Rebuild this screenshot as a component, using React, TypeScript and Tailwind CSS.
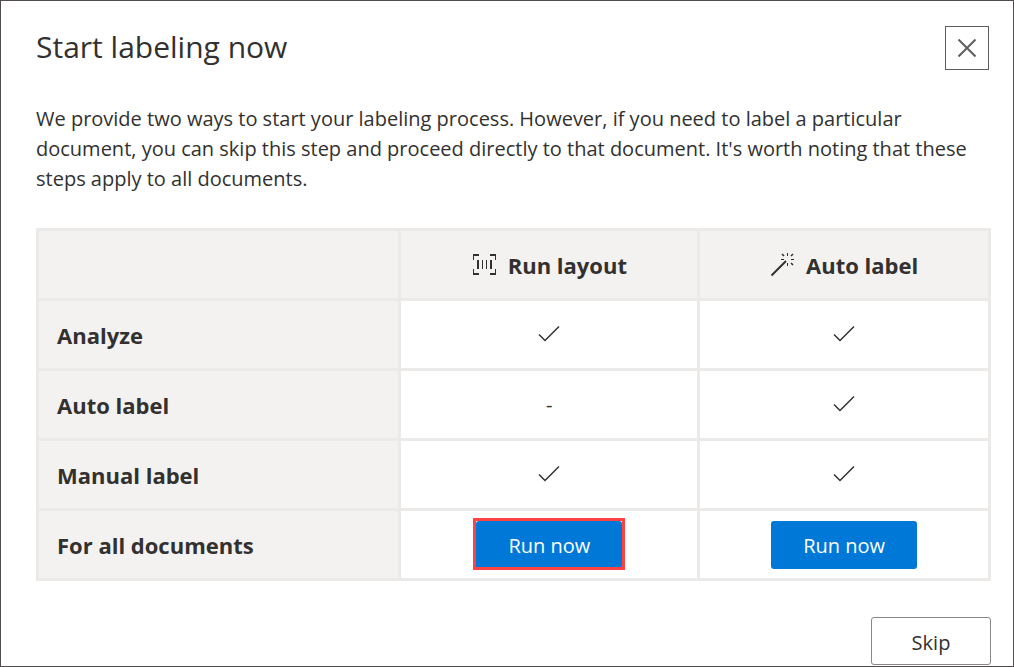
import React from "react";

function CheckMark() {
  return (
    <svg role="img" aria-label="Yes" className="mx-auto -mt-0.5 block" width="22" height="18" viewBox="0 0 22 18" fill="none" stroke="#323130" strokeWidth="1.5">
      <path d="M1 9.5 7 15.5 21 1.5" />
    </svg>
  );
}

function LayoutIcon() {
  return (
    <svg aria-hidden="true" width="24" height="22" viewBox="0 0 24 22" fill="#323130">
      <path d="M1 0H7V2H2V6H1ZM18 0H24V6H23V2H18ZM1 15H2V19H7V21H1ZM23 15H24V21H18V19H23Z" />
      <path d="M5 6H7V15H5ZM10 6H11V15H10ZM14 6H15V15H14ZM18 6H20V15H18Z" />
    </svg>
  );
}

function WandIcon() {
  return (
    <svg aria-hidden="true" width="24" height="24" viewBox="0 0 24 24" fill="none" stroke="#323130">
      <path strokeWidth="2" d="M1.5 22.5 16 8" />
      <path strokeWidth="1" d="M17.5 0V3M17.5 10V13M11 6.5H14M21 6.5H24" />
      <path strokeWidth="1.6" d="M12 1 14 3M23 1 21 3M23 12 21 10" />
    </svg>
  );
}

function RunButton({ highlighted = false, label }: { highlighted?: boolean; label: string }) {
  return (
    <button type="button" aria-label={label} className="relative h-12 w-[146px] rounded-[3px] bg-[#0078d7] pt-0.5 align-middle text-xl text-white">
      Run now
      {highlighted && <span className="absolute -inset-x-[3px] -top-[3px] -bottom-px border-[3px] border-[#ff4343]" />}
    </button>
  );
}

const rows = [
  { name: "Analyze", layout: true, auto: true },
  { name: "Auto label", layout: false, auto: true },
  { name: "Manual label", layout: true, auto: true },
];

const head = "bg-[#f3f2f1] p-0 text-[22px] leading-7 font-bold";
const rowHead = "h-[67px] bg-[#f3f2f1] py-0 pr-4 pl-[18px] text-left text-[22px] leading-7 font-bold";
const cell = "bg-white p-0 text-center text-xl";

export default function App() {
  return (
    <main className="min-h-screen border border-[#504b4d] bg-white pt-[25px] pr-[22px] pb-px pl-[35px] font-['Open_Sans','Noto_Sans',sans-serif] text-[#323130]">
      <header className="flex items-start justify-between pr-0.5">
        <h1 className="text-[30px] leading-[42px] font-medium">Start labeling now</h1>
        <button type="button" aria-label="Close" className="flex h-11 w-11 items-center justify-center border border-[#605e5c]">
          <svg width="18" height="18" viewBox="0 0 18 18" fill="none" stroke="#605e5c" strokeWidth="2">
            <path d="M0.5 0.5 17.5 17.5M17.5 0.5 0.5 17.5" />
          </svg>
        </button>
      </header>
      <p className="mt-[34px] text-xl leading-[30px]">
        We provide two ways to start your labeling process. However, if you need to label a particular document, you can skip this step and proceed directly to that document. It's worth noting that these steps apply to all documents.
      </p>
      <table className="mt-[34px] w-full table-fixed border-separate border-spacing-[3px] bg-[#ebeae9]">
        <colgroup>
          <col className="w-[38.1%]" />
          <col className="w-[31.4%]" />
          <col />
        </colgroup>
        <thead>
          <tr>
            <td className="h-[67px] bg-[#f3f2f1] p-0" />
            <th scope="col" className={head}>
              <span className="flex items-center justify-center gap-3"><LayoutIcon />Run layout</span>
            </th>
            <th scope="col" className={head}>
              <span className="flex items-center justify-center gap-3"><WandIcon />Auto label</span>
            </th>
          </tr>
        </thead>
        <tbody>
          {rows.map((row) => (
            <tr key={row.name}>
              <th scope="row" className={rowHead}>{row.name}</th>
              <td className={cell}>{row.layout ? <CheckMark /> : "-"}</td>
              <td className={cell}>{row.auto ? <CheckMark /> : "-"}</td>
            </tr>
          ))}
          <tr>
            <th scope="row" className={rowHead}>For all documents</th>
            <td className={cell}><RunButton highlighted label="Run now: Run layout" /></td>
            <td className={cell}><RunButton label="Run now: Auto label" /></td>
          </tr>
        </tbody>
      </table>
      <footer className="mt-9 flex justify-end">
        <button type="button" className="h-12 w-[120px] rounded-[3px] border border-[#8a8886] bg-white pt-1 text-xl">Skip</button>
      </footer>
    </main>
  );
}
